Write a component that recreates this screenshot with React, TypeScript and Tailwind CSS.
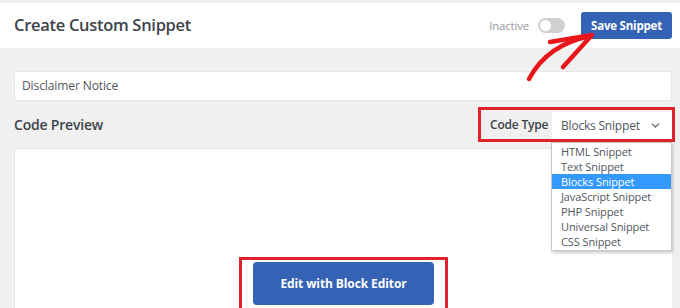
import { ChevronDown } from "lucide-react";

const options = [
  "HTML Snippet",
  "Text Snippet",
  "Blocks Snippet",
  "JavaScript Snippet",
  "PHP Snippet",
  "Universal Snippet",
  "CSS Snippet",
];

export default function App() {
  return (
    <div
      className="relative w-[680px] h-[308px] overflow-hidden bg-[#f0f0f1] flex flex-col"
      style={{ fontFamily: '"Open Sans", "Noto Sans", sans-serif' }}
    >
      {/* header */}
      <div className="mt-[3px] h-[45px] bg-white flex items-center justify-between pl-[14px] pr-[8px]">
        <h1 className="text-[16.5px] font-semibold text-[#3c434a] tracking-[-0.3px] whitespace-nowrap">
          Create Custom Snippet
        </h1>
        <div className="flex items-center">
          <span className="text-[11.5px] text-[#9a9a9a] mr-[9px] tracking-[-0.2px]">Inactive</span>
          <div className="w-[27px] h-[15px] rounded-full bg-[#d0d0d0] flex items-center pl-[2px] mr-[16px]">
            <div className="w-[11px] h-[11px] rounded-full bg-white" />
          </div>
          <button className="w-[91px] h-[27px] rounded-[3px] bg-[#3462b5] text-white text-[11.5px] font-bold tracking-[-0.2px] whitespace-nowrap">
            Save Snippet
          </button>
        </div>
      </div>

      <div className="flex-1 flex flex-col pl-[14px] pr-[8px]">
        <div className="mt-[23px] h-[30px] bg-white border border-[#e6e7e9] rounded-[2px] flex items-center pl-[7px] text-[12px] text-[#50575e] tracking-[-0.1px]">
          Disclaimer Notice
        </div>

        <div className="mt-[6px] flex items-center justify-between">
          <span className="text-[14px] font-semibold text-[#3c434a] tracking-[-0.2px] whitespace-nowrap">Code Preview</span>
          <div className="relative -mr-[3px] w-[197px] h-[35px] border-[3px] border-[#e0202a] flex items-center pl-[9px]">
            <span className="text-[12px] font-semibold text-[#3c434a] tracking-[-0.2px] whitespace-nowrap">Code Type</span>
            <div className="ml-auto mt-[2px] w-[120px] h-[27px] bg-white flex items-center pl-[9px] pr-[10px] text-[12px] text-[#50575e] tracking-[-0.2px] whitespace-nowrap">
              <span>Blocks Snippet</span>
              <ChevronDown className="ml-auto w-[13px] h-[13px] text-[#50575e]" strokeWidth={2} />
            </div>
            <ul className="absolute left-[70px] top-[32px] w-[121px] bg-white border border-[#c8c8c8] shadow-[1px_2px_3px_rgba(0,0,0,0.2)] py-[1px] z-10">
              {options.map((o) => (
                <li
                  key={o}
                  className={
                    o === "Blocks Snippet"
                      ? "h-[15px] leading-[15px] pl-[9px] text-[11px] tracking-[-0.1px] whitespace-nowrap bg-[#3399ff] text-white"
                      : "h-[15px] leading-[15px] pl-[9px] text-[11px] tracking-[-0.1px] whitespace-nowrap text-[#50575e]"
                  }
                >
                  {o}
                </li>
              ))}
            </ul>
          </div>
        </div>

        <div className="mt-[6px] flex-1 bg-white border-l border-t border-[#e6e7e9] flex justify-center pt-[108px]">
          <div className="h-[51px] border-[3px] border-b-0 border-[#e0202a] px-[11px] pt-[2px] bg-white">
            <button className="w-[181px] h-[43px] rounded-[4px] bg-[#3462b5] text-white text-[12px] font-bold tracking-[-0.1px] whitespace-nowrap">
              Edit with Block Editor
            </button>
          </div>
        </div>
      </div>

      {/* red annotation arrow */}
      <svg
        className="absolute left-0 top-0 pointer-events-none"
        width="680"
        height="308"
        viewBox="0 0 680 308"
      >
        <g stroke="#e8161b" strokeWidth="4.5" fill="none" strokeLinecap="round" strokeLinejoin="round">
          <path d="M529 79 C 540 58, 560 42, 591 36" />
          <path d="M550 42 L 592 35 L 563 67" />
        </g>
      </svg>
    </div>
  );
}
